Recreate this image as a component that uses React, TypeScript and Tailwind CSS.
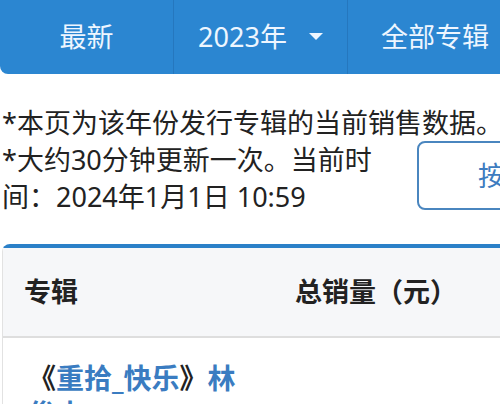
export default function App() {
    const font = { fontFamily: '"Noto Sans", "Noto Sans CJK SC", sans-serif' };

    return (
        <div className="w-[500px] h-[404px] overflow-hidden bg-white text-[#222]" style={font}>
            {/* top tabs */}
            <div className="flex w-[522px] h-[74px] bg-[#2b86d1] rounded-bl-[8px] text-[27px] text-[#eef6ff]">
                <div className="w-[174px] flex items-center justify-center border-r border-[#2577be]">
                    最新
                </div>
                <div className="w-[174px] flex items-center justify-center gap-[22px] border-r border-[#2577be]">
                    <span>2023年</span>
                    <svg width="14" height="8" viewBox="0 0 14 8">
                        <path d="M0 0 L14 0 L7 7 Z" fill="#eef6ff" />
                    </svg>
                </div>
                <div className="w-[174px] flex items-center justify-center">
                    全部专辑
                </div>
            </div>

            {/* notes */}
            <div className="mt-[30px] pl-[2px] text-[27px] leading-[37px]">
                <p className="whitespace-nowrap">*本页为该年份发行专辑的当前销售数据。</p>
                <div className="flex">
                    <p className="w-[380px] shrink-0">
                        *大约30分钟更新一次。当前时间：2024年1月1日 10:59
                    </p>
                    <button className="ml-[35px] h-[69px] w-[200px] shrink-0 border-2 border-[#4a86bf] rounded-[8px] text-left pl-[59px] text-[#3d7cc0] text-[27px]">
                        按销量排序
                    </button>
                </div>
            </div>

            {/* table */}
            <div className="mt-[29px] ml-[2px] w-[520px] border-t-4 border-l border-t-[#2a80c8] border-l-[#e2e2e2] rounded-tl-[8px]">
                <div className="flex h-[90px] items-center bg-[#f6f7f9] border-b-2 border-[#dedede] font-bold text-[27px]">
                    <div className="w-[292px] pl-[21px]">专辑</div>
                    <div>总销量（元）</div>
                </div>
                <div className="w-[247px] pl-[25px] pt-[22px] text-[28px] leading-[36px] font-bold">
                    <span>《</span>
                    <span className="text-[#3a7cc1]">重拾_快乐</span>
                    <span>》</span>
                    <span className="text-[#3a7cc1]">林俊杰</span>
                </div>
            </div>
        </div>
    );
}
